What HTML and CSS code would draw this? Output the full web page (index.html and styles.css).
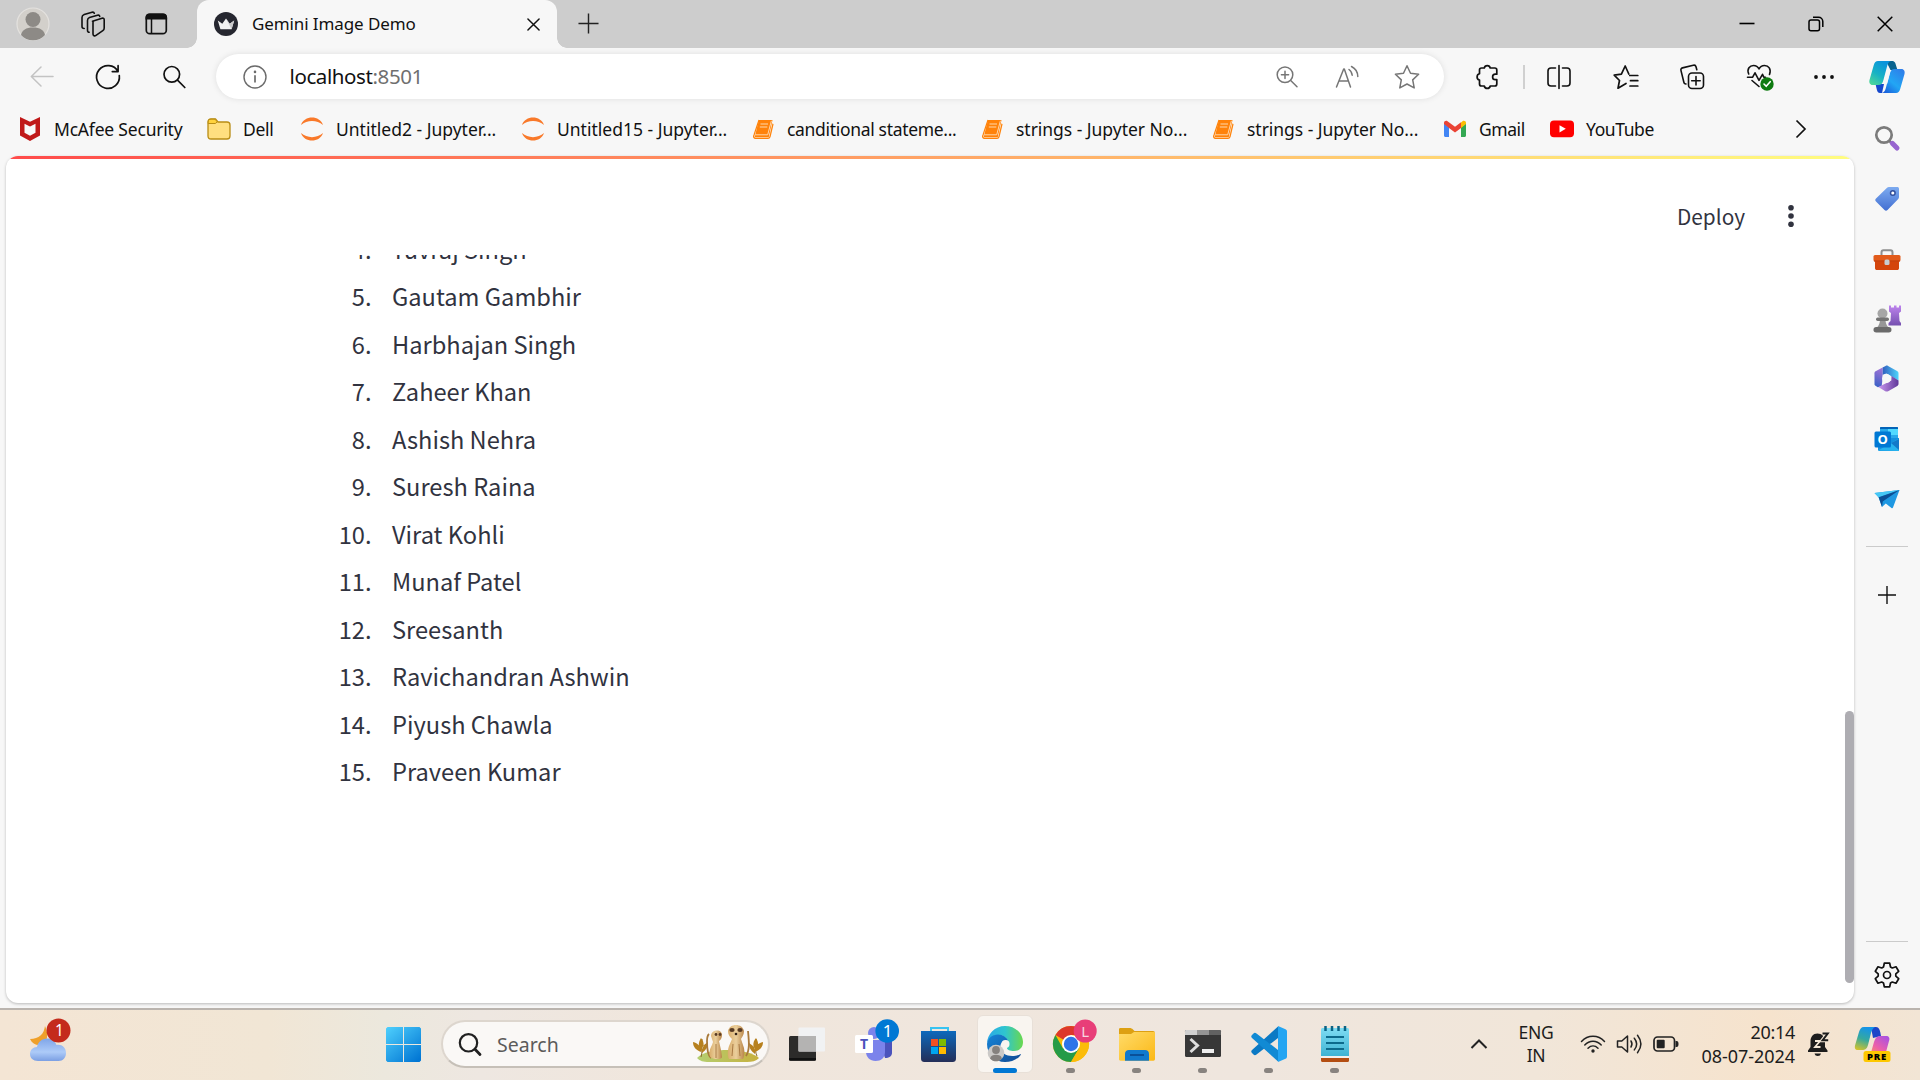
FILE: index.html
```html
<!DOCTYPE html>
<html lang="en">
<head>
<meta charset="utf-8">
<title>Gemini Image Demo</title>
<link rel="stylesheet" href="styles.css">
</head>
<body>
<div class="desktop">
  <header class="tabstrip">
    <div class="strip-left">
      <svg class="avatar" viewBox="0 0 34 34"><circle cx="17" cy="17" r="16" fill="#d3d0cb" stroke="#e4e2df" stroke-width="1.2"/><circle cx="17" cy="12.500" r="7.500" fill="#8d8a86"/><path d="M5 28c1-5 5-7.500 12-7.500s11 2.500 12 7.500c-3 3.500-7 5.200-12 5.200S8 31.500 5 28z" fill="#8d8a86"/></svg>
      <svg class="i26" viewBox="0 0 26 26" fill="none" stroke="#111" stroke-width="1.600" stroke-linejoin="round" stroke-linecap="round"><path d="M12.500 10.200l9.500-2.900c1.300-.4 2.200.2 2.200 1.500V17c0 1.200-.4 2-1.400 2.700l-6.800 4.700c-1.500 1-3 .4-3-1.300V11.500c0-.7 0-1 .5-1.300z"/><path d="M9.200 21.200c-1 0-1.700-.7-1.700-2V9.500c0-1.500.7-2.500 2-3L17.500 4.200c1.200-.3 2 .2 2.200 1.200"/><path d="M4.200 17.500c-1.400 0-2.200-.8-2.200-2V6.500C2 5 2.800 4 4.200 3.500L12 1.200c1.200-.3 2 .1 2.300 1"/></svg>
      <svg class="i26" viewBox="0 0 26 26"><rect x="3.300" y="3.300" width="20" height="19.400" rx="3.500" fill="none" stroke="#111" stroke-width="1.700"/><path d="M2.500 8.500V6.500a4 4 0 014-4h13.600a4 4 0 014 4v2z" fill="#111"/><path d="M8.500 8v14.500" stroke="#111" stroke-width="1.500"/></svg>
    </div>
    <div class="tab">
      <svg class="i24" viewBox="0 0 24 24"><circle cx="12" cy="12" r="12" fill="#262730"/><path d="M3.800 8.500l4.500 3.200L12 6.500l3.700 5.200 4.500-3.200-2.600 8.700H6.400z" fill="#f2f2f2"/><path d="M12 6.500l3.700 5.200 4.500-3.200-2.600 8.700z" fill="#c9c9cb"/></svg>
      <span class="tab-title">Gemini Image Demo</span>
      <svg class="tab-close" viewBox="0 0 14 14" stroke="#111" stroke-width="1.600" stroke-linecap="round"><path d="M1 1l12 12M13 1L1 13"/></svg>
    </div>
    <svg class="newtab" viewBox="0 0 22 22" stroke="#222" stroke-width="1.500"><path d="M11 .5v21M.5 11h21"/></svg>
    <div class="win-buttons">
      <svg viewBox="0 0 16 16" stroke="#000" stroke-width="1.600"><path d="M.5 7.500h15"/></svg>
      <svg viewBox="0 0 16 16" fill="none" stroke="#000" stroke-width="1.500"><rect x="1" y="4" width="10.500" height="10.800" rx="2"/><path d="M5 1.300h5.500a4.300 4.300 0 014.300 4.300V11"/></svg>
      <svg viewBox="0 0 16 16" stroke="#000" stroke-width="1.500"><path d="M.7.700l14.600 14.600M15.300.7L.7 15.300"/></svg>
    </div>
  </header>

  <div class="browser">
    <div class="main">
      <nav class="toolbar">
        <div class="nav-left">
          <svg class="i24" viewBox="0 0 24 24" fill="none" stroke="#c3c3c3" stroke-width="1.500" stroke-linecap="round" stroke-linejoin="round"><path d="M23 11.500H1.500M11 2L1.300 11.500 11 21"/></svg>
          <svg class="i26" viewBox="0 0 26 26" fill="none" stroke="#111" stroke-width="1.700" stroke-linecap="round" stroke-linejoin="round"><path d="M24.300 11.500A11.400 11.400 0 1123 7.500M17.300 7.600h5.800V1.700"/></svg>
          <svg class="i24" viewBox="0 0 24 24" fill="none" stroke="#111" stroke-width="1.700" stroke-linecap="round"><circle cx="9.800" cy="9.300" r="7.800"/><path d="M15.500 15.200l7.300 7.300"/></svg>
        </div>
        <div class="address">
          <svg class="i24" viewBox="0 0 24 24" fill="none" stroke="#6b6b6b" stroke-width="1.400"><circle cx="12" cy="12" r="11"/><path d="M12 10.200v7.300" stroke-width="1.700"/><circle cx="12" cy="6.900" r=".6" fill="#6b6b6b"/></svg>
          <span class="url">localhost<span class="port">:8501</span></span>
          <div class="address-actions">
            <svg class="i24" viewBox="0 0 24 24" fill="none" stroke="#767676" stroke-width="1.500" stroke-linecap="round"><circle cx="10" cy="9.800" r="7.800"/><path d="M15.700 15.500l6.300 6.300M10 6.200v7.200M6.400 9.800h7.200"/></svg>
            <svg class="i24" viewBox="0 0 24 24" fill="none" stroke="#767676" stroke-width="1.500" stroke-linecap="round" stroke-linejoin="round"><path d="M1.500 22L8.700 4h.6l6.200 18M3.900 16h9.400M14 4.500c2 1.400 3 3.400 3.200 5.800M16.500 1.500c4 2 6.200 5.500 6.300 10"/></svg>
            <svg class="i26" viewBox="0 0 26 26" fill="none" stroke="#767676" stroke-width="1.500" stroke-linejoin="round"><path d="M13 1.800l3.500 7.400 8.100 1.100-5.900 5.600 1.500 8L13 20l-7.200 3.900 1.500-8-5.900-5.600 8.100-1.100z"/></svg>
          </div>
        </div>
        <div class="tools">
          <svg class="i26" viewBox="0 0 26 26" fill="none" stroke="#111" stroke-width="1.700" stroke-linejoin="round"><path d="M10.300 4a3 3 0 015.900 0h4.600c1.300 0 2 .7 2 2v4.200h-1.500a2.700 2.700 0 000 5.400h1.500V20c0 1.300-.7 2-2 2h-4.600a3 3 0 01-5.900 0H7.500c-1.300 0-2-.7-2-2v-4a3.200 3.200 0 010-6.200V6c0-1.300.7-2 2-2z"/></svg>
          <i class="divider"></i>
          <svg class="i26" viewBox="0 0 26 26" fill="none" stroke="#111" stroke-width="1.600" stroke-linecap="round"><path d="M13 1.500v23M9.500 4H5C3 4 2 5 2 7v12c0 2 1 3 3 3h4.500M16.500 4H21c2 0 3 1 3 3v12c0 2-1 3-3 3h-4.500"/></svg>
          <svg class="i26" viewBox="0 0 26 26" fill="none" stroke="#111" stroke-width="1.700" stroke-linecap="round" stroke-linejoin="round"><path d="M13 19.500l-8 4.700 1.500-7.700-5.300-5.400 7.200-1L12.200 2l3.600 8M16.800 11.500h8M17.500 16.700h7.300M17 22h7.800"/></svg>
          <svg class="i26" viewBox="0 0 26 26" fill="none" stroke="#111" stroke-width="1.600" stroke-linejoin="round" stroke-linecap="round"><rect x="9.500" y="9" width="15" height="15.500" rx="3.500"/><path d="M17 12.500v8.500M12.700 16.700h8.500M7 20c-1 0-2-.7-2.200-2L2 6.600c-.4-1.300.2-2.400 1.500-2.700L14.300 1.200c1.300-.3 2.400.3 2.700 1.500l.8 3"/></svg>
          <svg class="heart" viewBox="0 0 28 28" fill="none" stroke="#111" stroke-width="1.600" stroke-linejoin="round" stroke-linecap="round"><path d="M2.700 11C.5 5.500 4 2.500 7.500 2.500c2.500 0 4.400 1.300 5.500 3.500 1.100-2.200 3-3.500 5.500-3.500 4 0 7 3.500 5 9M1.500 14.300h5l2.500-4.500 4 7.500 3.500-6 1.500 3h1.500M6 17.500l7 6"/><circle cx="21" cy="21" r="6.700" fill="#0f7b10" stroke="none"/><path d="M18 21l2.200 2.300 4-4.600" stroke="#fff"/></svg>
          <svg class="i24" viewBox="0 0 24 24" fill="#111"><circle cx="4" cy="12" r="1.900"/><circle cx="12" cy="12" r="1.900"/><circle cx="20" cy="12" r="1.900"/></svg>
        </div>
      </nav>

      <nav class="bookmarks">
        <a><svg class="bi" viewBox="0 0 24 24"><path d="M2 0l10 4.700L22 0v18.500L12 24 2 18.500z" fill="#c01818"/><path d="M6.500 6.800L12 9.500l5.500-2.700v9L12 18.700l-5.500-2.900z" fill="#f7f7f7"/></svg><span class="t1">McAfee Security</span></a>
        <a><svg class="bi" viewBox="0 0 24 24"><path d="M1 5c0-2 1-3 3-3h4.500l2.500 3h9c2 0 3 1 3 3v11c0 2-1 3-3 3H4c-2 0-3-1-3-3z" fill="#ffdf80" stroke="#b98d14" stroke-width="1.300"/><path d="M1.200 6.500V5c0-2 1-2.800 2.800-2.800h4l2.300 2.700-2 1.600z" fill="#ffd23d" stroke="#b98d14"/></svg><span class="t2">Dell</span></a>
        <a><svg class="bi" viewBox="0 0 24 24" fill="#f9792a"><path d="M1 8C4-2 20-2 23 8 17 2.500 7 2.500 1 8zM1 16c6 5.500 16 5.500 22 0-3 10-19 10-22 0z"/></svg><span class="t3">Untitled2 - Jupyter...</span></a>
        <a><svg class="bi" viewBox="0 0 24 24" fill="#f9792a"><path d="M1 8C4-2 20-2 23 8 17 2.500 7 2.500 1 8zM1 16c6 5.500 16 5.500 22 0-3 10-19 10-22 0z"/></svg><span class="t4">Untitled15 - Jupyter...</span></a>
        <a><svg class="bi" viewBox="0 0 24 24"><path d="M8 3h13.500l-3.800 17.500H3.500z" fill="#ff8209"/><path d="M21.500 6l.3 1-3.500 13.500H4c-1.500-.4-1.500-2-.5-2.700h13.200l3.700-14M9.500 7h7.500M8.800 10h7.500" fill="none" stroke="#ffd8ac" stroke-width="1"/><path d="M8 3L3 18c-1 2 0 3.300 1.500 3.300H17c1 0 1.700-.5 2-1.500L22 7" fill="none" stroke="#ff8209" stroke-width="1.200"/></svg><span class="t5">canditional stateme...</span></a>
        <a><svg class="bi" viewBox="0 0 24 24"><path d="M8 3h13.500l-3.800 17.500H3.500z" fill="#ff8209"/><path d="M21.500 6l.3 1-3.500 13.500H4c-1.500-.4-1.500-2-.5-2.700h13.200l3.700-14M9.500 7h7.500M8.800 10h7.500" fill="none" stroke="#ffd8ac" stroke-width="1"/><path d="M8 3L3 18c-1 2 0 3.300 1.500 3.300H17c1 0 1.700-.5 2-1.500L22 7" fill="none" stroke="#ff8209" stroke-width="1.200"/></svg><span class="t6">strings - Jupyter No...</span></a>
        <a><svg class="bi" viewBox="0 0 24 24"><path d="M8 3h13.500l-3.800 17.500H3.500z" fill="#ff8209"/><path d="M21.500 6l.3 1-3.500 13.500H4c-1.500-.4-1.500-2-.5-2.700h13.200l3.700-14M9.500 7h7.500M8.800 10h7.500" fill="none" stroke="#ffd8ac" stroke-width="1"/><path d="M8 3L3 18c-1 2 0 3.300 1.500 3.300H17c1 0 1.700-.5 2-1.500L22 7" fill="none" stroke="#ff8209" stroke-width="1.200"/></svg><span class="t6">strings - Jupyter No...</span></a>
        <a><svg class="bi" viewBox="0 0 24 24"><path d="M1 6.500l5 3.700V20H2.500C1.600 20 1 19.400 1 18.500z" fill="#4285f4"/><path d="M18 10.200l5-3.700v12c0 .9-.6 1.500-1.500 1.500H18z" fill="#34a853"/><path d="M18 5.500l1.500-1.200C21 3.200 23 4.200 23 6v1l-5 4z" fill="#fbbc04"/><path d="M1 7V6c0-1.800 2-2.800 3.500-1.700L12 9.800l6-4.500V11l-6 4.500L6 11z" fill="#ea4335"/></svg><span class="t8">Gmail</span></a>
        <a><svg class="bi" viewBox="0 0 24 24"><rect y="3.500" width="24" height="16.800" rx="4" fill="#f00"/><path d="M9.500 8.200v7.200l6.300-3.600z" fill="#fff"/></svg><span class="t9">YouTube</span></a>
        <svg class="more" viewBox="0 0 12 20" fill="none" stroke="#111" stroke-width="1.700"><path d="M1.500 1.500l8.500 8.500-8.500 8.500"/></svg>
      </nav>

      <main class="page">
        <div class="app-header">
          <span class="deploy">Deploy</span>
          <svg class="kebab" viewBox="0 0 6 24" fill="#31333f"><circle cx="3" cy="3.700" r="2.800"/><circle cx="3" cy="12" r="2.800"/><circle cx="3" cy="20.300" r="2.800"/></svg>
        </div>
        <div class="scroller">
          <ol class="names">
            <li><b>4.</b><span>Yuvraj Singh</span></li>
            <li><b>5.</b><span>Gautam Gambhir</span></li>
            <li><b>6.</b><span>Harbhajan Singh</span></li>
            <li><b>7.</b><span>Zaheer Khan</span></li>
            <li><b>8.</b><span>Ashish Nehra</span></li>
            <li><b>9.</b><span>Suresh Raina</span></li>
            <li><b>10.</b><span>Virat Kohli</span></li>
            <li><b>11.</b><span>Munaf Patel</span></li>
            <li><b>12.</b><span>Sreesanth</span></li>
            <li><b>13.</b><span>Ravichandran Ashwin</span></li>
            <li><b>14.</b><span>Piyush Chawla</span></li>
            <li><b>15.</b><span>Praveen Kumar</span></li>
          </ol>
          <div class="scrollbar"></div>
        </div>
      </main>
    </div>

    <aside class="sidebar">
      <svg class="copilot" viewBox="0 0 36 34">
        <defs>
          <linearGradient id="cpA" x1="0" y1="1" x2=".6" y2="0"><stop offset="0" stop-color="#56dc92"/><stop offset=".5" stop-color="#18b2c4"/><stop offset="1" stop-color="#0a93dc"/></linearGradient>
          <linearGradient id="cpB" x1="1" y1="0" x2=".2" y2="1"><stop offset="0" stop-color="#3079e8"/><stop offset=".6" stop-color="#22a6f4"/><stop offset="1" stop-color="#1b62dc"/></linearGradient>
        </defs>
        <path d="M17 1h6c3 0 3.600 2.500 4.200 5l1.300 4h-7z" fill="#09638f"/><path d="M13 33h-2c-2 0-2.700-1.500-3.200-3.500L6.500 24H15z" fill="#1648cc"/>
        <path d="M9 1h13c-2 .5-3 2-3.700 4.500l-4 15c-.8 3-2.200 4.500-5 4.500H3.500C1 25-.2 22.500.5 20L4.800 5C5.600 2.500 6.800 1 9 1z" fill="url(#cpA)"/>
        <path d="M27 33H12.500c2.500-.5 3.500-2 4.200-4.500l4-15c.8-3 2.200-4.500 5-4.500h6.800c2.500 0 3.700 2.500 3 5L31.200 29c-.8 2.500-2 4-4.200 4z" fill="url(#cpB)"/>
        <path d="M18.500 10.500h3.200l-3.600 13.500h-4.600z" fill="#f7f7f7"/>
      </svg>
      <svg class="s-search" viewBox="0 0 26 26"><circle cx="10" cy="10" r="7.700" fill="none" stroke="#7b7b7b" stroke-width="2.700"/><path d="M15.500 16l3 3" stroke="#777" stroke-width="2.500"/><path d="M18.300 18.300l4.700 4.700" stroke="#9765cf" stroke-width="5" stroke-linecap="round"/></svg>
      <svg class="s-tag" viewBox="0 0 26 26"><defs><linearGradient id="tg" x1="0" y1="0" x2="0" y2="1"><stop offset="0" stop-color="#7dabf0"/><stop offset="1" stop-color="#426fd2"/></linearGradient></defs><path d="M15 1h8c1.400 0 2 .6 2 2v8c0 .9-.4 1.600-1 2.200L13.500 24c-1 1-2 1-3 0L2 15.500c-1-1-1-2 0-3L12.800 2c.6-.6 1.300-1 2.200-1z" fill="url(#tg)"/><circle cx="18.800" cy="7" r="2.300" fill="#fff" stroke="#314f9e" stroke-width="1.500"/></svg>
      <svg class="s-box" viewBox="0 0 28 22"><path d="M8.500 6V3.500C8.500 2 9.300 1.300 10.500 1.300h7c1.200 0 2 .7 2 2.200V6" fill="none" stroke="#8e8e8e" stroke-width="2"/><path d="M2 11h24v8c0 1.400-.8 2-2 2H4c-1.200 0-2-.6-2-2z" fill="#d4450c"/><rect x=".5" y="6" width="27" height="6.500" rx="1.500" fill="#e25b1b"/><path d="M1 12h26" stroke="#bc3808"/><rect x="11.500" y="10.500" width="5" height="5.500" rx="1.500" fill="#c7cdd2"/></svg>
      <svg class="s-chess" viewBox="0 0 28 28"><defs><linearGradient id="pk" x1="0" y1="0" x2="0" y2="1"><stop offset="0" stop-color="#bd83ed"/><stop offset="1" stop-color="#7651b0"/></linearGradient></defs><path d="M16 .5h2v2h3v-2h2.500v2h2.500v-2h2v6l-2 1.500.5 8 1.500 2v2.500H15.500V18l2-2 .5-8-2-1.500z" fill="url(#pk)"/><circle cx="9.500" cy="8.500" r="5" fill="#a6a6a6"/><path d="M7 14h5.500c0 4 .8 6 3 8.500H4c2.200-2.500 3-4.500 3-8.500z" fill="#979797"/><rect x="3" y="12.500" width="13" height="3.500" rx="1.700" fill="#747474"/><rect x=".5" y="22" width="18" height="5.500" rx="2.700" fill="#6b6b6b"/></svg>
      <svg class="s-m365" viewBox="0 0 26 28"><defs><linearGradient id="ma" x1=".2" y1="0" x2="0" y2="1"><stop offset="0" stop-color="#9b72d5"/><stop offset="1" stop-color="#335fc5"/></linearGradient><linearGradient id="mb"><stop offset="0" stop-color="#315fbf"/><stop offset="1" stop-color="#4ed5fc"/></linearGradient><linearGradient id="mc"><stop offset="0" stop-color="#cb99f1"/><stop offset="1" stop-color="#603799"/></linearGradient></defs><path d="M9 2.500V13l-1 9-4 1-2.500-1.500C.7 21 .5 20.500.5 19.500V8.500c0-1 .4-1.500 1.200-2z" fill="url(#ma)"/><path d="M9 10V2.500l3-1.600c1-.5 1.700-.5 2.600 0L24 6.200c1 .5 1.500 1.300 1.500 2.500V16l-8-4.700L13 8.800z" fill="url(#mb)"/><path d="M25.500 16v3.500c0 1-.5 1.700-1.300 2.200l-9.500 5.500c-1 .5-2 .5-3 0l-7.200-4.300 8-4L18 16l.2-4.500z" fill="url(#mc)"/><circle cx="13" cy="14" r="4.600" fill="#f7f7f7"/></svg>
      <svg class="s-outlook" viewBox="0 0 26 26"><rect x="6" y="1" width="18" height="14" rx="1.200" fill="#28a8ea"/><path d="M6 2.200C6 1.500 6.500 1 7 1h16c.6 0 1 .5 1 1.200V3H6z" fill="#0364b8"/><path d="M14 3h10v6H14z" fill="#50d9ff"/><path d="M4 12h21v12c0 .7-.5 1-1 1H5.200c-.7 0-1.200-.5-1.200-1.200z" fill="#1490df"/><path d="M4 24.500L25 12.500V24c0 .7-.5 1-1.200 1z" fill="#28b3ee"/><path d="M17 17l8 7v-11z" fill="#1479c9"/><rect x=".5" y="5.500" width="16.500" height="16" rx="1.500" fill="#0078d4"/><text x="8.700" y="18.200" text-anchor="middle" class="glyph" font-size="13" fill="#fff">O</text></svg>
      <svg class="s-send" viewBox="0 0 26 20"><path d="M.5 4L25.500 1 19 18.500c-.3.800-.8 1-1.500.6l-5.700-4.600L8 18 4.500 8.300z" fill="#1e98e2"/><path d="M.5 4L25.500 1 4.800 8.500z" fill="#45c7f5"/><path d="M4.700 8.300L25.500 1 8.700 12.500 8 18z" fill="#0b4f95"/></svg>
      <i class="s-line"></i>
      <svg class="s-plus" viewBox="0 0 18 18" stroke="#111" stroke-width="1.400"><path d="M9 0v18M0 9h18"/></svg>
      <div class="s-bottom">
        <i class="s-line"></i>
        <svg class="s-gear" viewBox="0 0 26 26" fill="none" stroke="#111" stroke-width="1.700" stroke-linejoin="round"><path d="M10.300 1.200h5.400l.8 3.800 1.800 1 3.700-1.200L24.700 9.300l-2.900 2.600v2.200l2.900 2.600L22 21.200 18.300 20l-1.800 1-.8 3.800h-5.400L9.500 21l-1.800-1L4 21.200l-2.700-4.500 2.900-2.600v-2.200L1.300 9.300 4 4.800 7.700 6l1.800-1z"/><circle cx="13" cy="13" r="3.500"/></svg>
      </div>
    </aside>
  </div>

  <footer class="taskbar">
    <div class="weather">
      <svg viewBox="0 0 42 44"><defs><linearGradient id="cl" x1="0" y1="0" x2="0" y2="1"><stop offset="0" stop-color="#7fa5e8"/><stop offset=".6" stop-color="#adcbf8"/><stop offset="1" stop-color="#7b9fe3"/></linearGradient></defs><path d="M15 8c4 9 3 17-6 19-4 0-7-2-9-6 9 0 14-5 15-13z" fill="#efa02a"/><path d="M8 43c-5 0-8-3.200-8-7 0-4 3-7 7-7 1-5 5-8.500 10-8.500 4.500 0 8 2.500 9.500 6.500 5-1 9.500 2.500 9.500 8 0 4.500-3 8-7.500 8z" fill="url(#cl)"/><circle cx="28.500" cy="12.500" r="12" fill="#c42b1c"/><text x="29.500" y="18" text-anchor="middle" class="badge-text" font-size="15.500" fill="#fff">1</text></svg>
    </div>
    <div class="center">
      <svg class="start" viewBox="0 0 35 35"><defs><linearGradient id="wn" gradientUnits="userSpaceOnUse" x1="0" y1="0" x2="30" y2="35"><stop offset="0" stop-color="#4fd0fd"/><stop offset="1" stop-color="#0277d4"/></linearGradient></defs><path d="M1.500 0H17v17H0V1.500zM18 0h15.500L35 1.500V17H18zM0 18h17v17H1.500L0 33.500zM18 18h17v15.500L33.500 35H18z" fill="url(#wn)"/></svg>
      <div class="searchbox">
        <svg class="i24" viewBox="0 0 24 24" fill="none" stroke="#202020" stroke-width="2.200" stroke-linecap="round"><circle cx="10.500" cy="10.800" r="8.700"/><path d="M17 17.300l5 5.200" stroke-width="2.800"/></svg>
        <span>Search</span>
        <svg class="meerkats" viewBox="0 0 72 40"><defs><linearGradient id="gr"><stop offset="0" stop-color="#b4cf72"/><stop offset="1" stop-color="#c7b03e"/></linearGradient><linearGradient id="fur"><stop offset="0" stop-color="#d9ad6b"/><stop offset=".5" stop-color="#ebcf9c"/><stop offset="1" stop-color="#b98548"/></linearGradient></defs>
          <path d="M5 34c5-6 19-8 31-8s26 3 31 8c-3 3-7 4-12 4H17c-6 0-9-1-12-4z" fill="url(#gr)"/>
          <path d="M9 33C11 28 9 22 10 15M65 32c-3-6 0-11-1-17" fill="none" stroke="#8b672a"/><path d="M1 18c5 1 8 5 8 10-5-2-8-5-8-10zM9 14c4 5 3 9 0 13-3-4-3-8 0-13zM16 18c-5 3-7 6-6 11 4-3 6-6 6-11zM71 18c-5 1-8 5-8 10 5-2 8-5 8-10zM64 14c-4 5-3 9 0 13 3-4 3-8 0-13zM57 19c5 3 7 6 6 11-4-3-6-6-6-11z" fill="#b7811f"/>
          <path d="M19 34c-4-3-4-12-4-17 0-4 1-6 2-7M54 32c4-6 3-15 2-25" fill="none" stroke="#a97a3c" stroke-width="1.800"/>
          <path d="M19 12c0-3 2-5.500 6-5.500 3 0 5 2 5 4.500s-1 5-3 6l2 9 1 7c0 1.500-2 2-5 2-6 0-8-2-7.500-7 .3-4 2.500-6 3.500-10z" fill="url(#fur)"/><path d="M36 7c1-4 4-6 8-6s7 2 8 6c0 4-2 6-3 8l3 9c1 5 0 9-1 11H37c-2-4-1-10 0-13l3-7c-2-2-4-4-4-8z" fill="url(#fur)"/>
          <ellipse cx="40" cy="6" rx="2.600" ry="2" fill="#583b25"/><ellipse cx="48" cy="6" rx="2.600" ry="2" fill="#583b25"/><circle cx="24" cy="10.500" r="1.400" fill="#583b25"/><circle cx="28" cy="10.500" r="1.400" fill="#583b25"/><circle cx="44" cy="10" r="1.300" fill="#35241a"/><path d="M24 20v14M41 20l-1 12M47 20l1 12" stroke="#a97a44" fill="none"/></svg>
      </div>
      <div class="app"><svg viewBox="0 0 56 56"><rect x="10" y="20" width="27" height="25" rx="1.500" fill="#2c2b2a"/><path d="M10 43h27" stroke="#111" stroke-width="2"/><rect x="19.500" y="11.500" width="26.500" height="24" rx="1" fill="#f1f2f3"/><path d="M19.500 20H37v15.500H19.500z" fill="#b4b3b2"/></svg></div>
      <div class="app"><svg viewBox="0 0 56 56"><circle cx="29" cy="17" r="6" fill="#7b83eb"/><path d="M34 24h13v13c0 3-3 5-7 5z" fill="#4b53bc"/><path d="M21 24h19v12c0 6-4 9-9.500 9S21 41 21 36z" fill="#7b83eb"/><rect x="10" y="19" width="18" height="18" rx="1.500" fill="#fff"/><text x="19" y="33" text-anchor="middle" class="glyph" font-size="14" fill="#4b53bc">T</text><circle cx="42.200" cy="15" r="11.800" fill="#0078d4"/><text x="42.500" y="21" text-anchor="middle" class="badge-text" font-size="17" fill="#fff">1</text></svg></div>
      <div class="app"><svg viewBox="0 0 56 56"><defs><linearGradient id="st" x1="0" y1="0" x2="0" y2="1"><stop offset="0" stop-color="#0d69bc"/><stop offset="1" stop-color="#242e58"/></linearGradient></defs><path d="M20 16v-4h17v4" fill="none" stroke="#37c3f1" stroke-width="2"/><path d="M10 15h35v27c0 3-1 4-4 4H14c-3 0-4-1-4-4z" fill="url(#st)"/><path d="M20 23h7v7h-7z" fill="#f25022"/><path d="M28 23h7v7h-7z" fill="#7fba00"/><path d="M20 31h7v7h-7z" fill="#00a4ef"/><path d="M28 31h7v7h-7z" fill="#ffb900"/></svg></div>
      <div class="app active"><svg viewBox="0 0 56 56"><defs><linearGradient id="ea"><stop offset="0" stop-color="#2aa8e8"/><stop offset=".5" stop-color="#2fc5cf"/><stop offset="1" stop-color="#6ad84d"/></linearGradient><linearGradient id="eb" x1="0" y1="0" x2="1" y2="1"><stop offset="0" stop-color="#1684d8"/><stop offset="1" stop-color="#114a93"/></linearGradient></defs><path d="M10 28c0-10 8-18 18-18 11 0 18 8 18 16 0 6-4 9-9 9-4 0-7-1-7-3 0-1 1.500-2 1.500-4.500 0-4-4-8.500-10-8.500S11 23 10 28z" fill="url(#ea)"/><path d="M10 28c1-6 5-9.500 11-9.500 5 0 9 3 10.300 6.500-5-1-8 2-8 6 0 6 6 9 12 9 4 0 7-1 8-2 .5 0 .7.400.4.900C40.500 43.500 34.500 46 28 46c-10 0-18-8-18-18z" fill="url(#eb)"/><circle cx="28.500" cy="28" r="4" fill="#f9f5f0"/><path d="M27 31c3 5 10 7 17 4l-1.500 3c-6 2-13 0-15.500-7z" fill="#f9f5f0"/><circle cx="19" cy="37" r="8.300" fill="#cbc9c7"/><circle cx="19" cy="34" r="3.900" fill="#85817e"/><path d="M13 42.500c1-3 3-3.700 6-3.700s5 .7 6 3.700c-2 2-3.800 2.800-6 2.800s-4.200-.8-6-2.800z" fill="#85817e"/></svg><i class="ind wide"></i></div>
      <div class="app"><svg viewBox="0 0 56 56"><circle cx="28" cy="28" r="18" fill="#fbbc05"/><path d="M28 28L12.400 19A18 18 0 0143.600 19H28z" fill="#dd382b"/><path d="M12.400 19A18 18 0 0028 46l8-13.500-8-4.500-8 4.500z" fill="#259b48"/><path d="M43.600 19H28v9l8 4.500L28 46a18 18 0 0015.600-27z" fill="#fbbc0a"/><circle cx="28" cy="28" r="9" fill="#fff"/><circle cx="28" cy="28" r="7.200" fill="#2f74e8"/><circle cx="42.200" cy="15" r="11.500" fill="#e83e78"/><text x="42.200" y="20.500" text-anchor="middle" class="badge-text" font-size="15" fill="#f7d5e0">L</text></svg><i class="ind"></i></div>
      <div class="app"><svg viewBox="0 0 56 56"><defs><linearGradient id="fd" x1="0" y1="0" x2="1" y2="1"><stop offset="0" stop-color="#ffdb69"/><stop offset="1" stop-color="#fbb816"/></linearGradient></defs><path d="M10 13.500c0-1 .5-1.500 1.500-1.500h9c1.500 0 2.500.5 3.500 1.500l1.500 1.500H44c1.200 0 2 .8 2 2v6H10z" fill="#dda012"/><path d="M10 18h12l3-2h21v27c0 1-.7 1.700-1.500 1.700h-33c-.9 0-1.500-.7-1.500-1.700z" fill="url(#fd)"/><path d="M16 44.700V38c0-2.500 1.500-4 4-4h16c2.500 0 4 1.500 4 4v6.700z" fill="#1179cd"/><path d="M21 39h14" stroke="#0b4c94" stroke-width="1.800"/></svg><i class="ind"></i></div>
      <div class="app"><svg viewBox="0 0 56 56"><rect x="10" y="14" width="36" height="27" rx="1.500" fill="#373737"/><path d="M10 19v-3.500c0-1 .5-1.500 1.500-1.500H22v5z" fill="#cfcfcf"/><path d="M22 14h12v5H22z" fill="#949494"/><path d="M34 14h10.500c1 0 1.500.5 1.500 1.500V19H34z" fill="#626262"/><path d="M15.500 23l7 6.500-7 6.500" fill="none" stroke="#ddd" stroke-width="3"/><path d="M27 33h12v4H27z" fill="#eee"/></svg><i class="ind"></i></div>
      <div class="app"><svg viewBox="0 0 56 56"><path d="M37 10.500L11 34c-1 1-1 2 0 3l1.500 1.500c1 1 2 .8 3 0L37 22z" fill="#0b79c4"/><path d="M37 45.500L11 22c-1-1-1-2 0-3l1.500-1.500c1-1 2-.8 3 0L37 34z" fill="#118ad4"/><path d="M37 10l7.500 3.200c1 .5 1.500 1.200 1.500 2.300v25c0 1.100-.5 1.800-1.500 2.300L37 46z" fill="#24a5f2"/></svg><i class="ind"></i></div>
      <div class="app"><svg viewBox="0 0 56 56"><path d="M14 38h28v6.500c0 .8-.5 1.500-1.500 1.500h-25c-1 0-1.500-.7-1.500-1.500z" fill="#b44e12"/><path d="M14 36h28v6H14z" fill="#f4f0ec"/><defs><linearGradient id="np" x1="0" y1="0" x2="0" y2="1"><stop offset="0" stop-color="#7edcf3"/><stop offset="1" stop-color="#3fb3d3"/></linearGradient></defs><path d="M14 14c0-1.500.5-2 2-2h24c1.500 0 2 .5 2 2v26H14z" fill="url(#np)"/><path d="M19 21h18M19 27h18M19 33h18" stroke="#0c6a8c" stroke-width="1.900"/><path d="M18.500 10v5M25 10v5M31.500 10v5M38 10v5" stroke="#0a6385" stroke-width="2.500"/></svg><i class="ind"></i></div>
    </div>
    <div class="tray">
      <svg class="chev" viewBox="0 0 18 10" fill="none" stroke="#222" stroke-width="2"><path d="M1.500 9L9 1.500 16.500 9"/></svg>
      <div class="lang"><span>ENG</span><span>IN</span></div>
      <svg class="wifi" viewBox="0 0 26 20" fill="none" stroke="#222" stroke-width="1.500" stroke-linecap="round"><path d="M1.500 7.500c6.500-7 16.500-7 23 0M4.800 11c4.600-5 11.800-5 16.400 0M8 14.300c3-3 7-3 10 0"/><circle cx="13" cy="17" r="1.700" fill="#222" stroke="none"/></svg>
      <svg class="speaker" viewBox="0 0 26 22" fill="none" stroke="#222" stroke-width="1.500" stroke-linecap="round" stroke-linejoin="round"><path d="M1.500 8v6h4.300l5.700 5V3L5.800 8zM15 8c1.300 2 1.300 4 0 6M18.300 5.200c3 3.700 3 8 0 11.700M21.500 2.300c4.300 5.500 4.300 11.900 0 17.400"/></svg>
      <svg class="battery" viewBox="0 0 26 16"><rect x="1" y="1" width="20.500" height="14" rx="3.500" fill="none" stroke="#222" stroke-width="1.700"/><rect x="3.700" y="3.700" width="8" height="8.600" rx="1" fill="#222"/><path d="M22.500 5h1c1.500 0 2 1 2 3s-.5 3-2 3h-1z" fill="#222"/></svg>
      <div class="clock"><span>20:14</span><span class="date">08-07-2024</span></div>
      <svg class="bell" viewBox="0 0 24 26" fill="#1d1d1d"><path d="M10.500 2.500C6 2.500 3.500 6 3.500 10.500V16L1 19.500V21h19.500v-1.500L18 16V10.500l-2-1V4.500c-1.500-1.300-3.500-2-5.500-2z"/><path d="M7.500 22.500h6.500c-.5 1.700-1.500 2.500-3.200 2.500s-2.800-.8-3.300-2.500z"/><path d="M8 10h5l-5 6h5.500" fill="none" stroke="#f3e7d6" stroke-width="1.800"/><path d="M15.500 2.500h5.300l-5.300 6.800h5.700" fill="none" stroke="#f3e7d6" stroke-width="4"/><path d="M15.500 2.500h5.300l-5.300 6.800h5.700" fill="none" stroke="#1d1d1d" stroke-width="1.900"/></svg>
      <svg class="cpre" viewBox="0 0 36 35"><defs><linearGradient id="p1" x1=".5" y1="0" x2=".2" y2="1"><stop offset="0" stop-color="#1694e8"/><stop offset=".5" stop-color="#35a99f"/><stop offset="1" stop-color="#d2c22c"/></linearGradient><linearGradient id="p2" x1="1" y1="0" x2=".2" y2="1"><stop offset="0" stop-color="#a14fe8"/><stop offset=".6" stop-color="#ec5faa"/><stop offset="1" stop-color="#fb9a58"/></linearGradient></defs><path d="M16 0h5c3 0 4 3 5 9l-8 2z" fill="#1c45c8"/><path d="M26 29H12c3-1 4-3 5-7l2-7c1-4 3-6 6-6h6c3 0 4 2 3 5l-3 11c-1 2-2 4-5 4z" fill="url(#p2)"/><path d="M9 0h11c-2 1-3 3-4 6l-3 12c-1 4-3 5-6 5H3c-3 0-3.500-2-3-4.500L4 5c1-3 2-5 5-5z" fill="url(#p1)"/><rect x="8.500" y="24" width="27" height="11" rx="2.500" fill="#fdc800"/><text x="22" y="32.700" text-anchor="middle" class="pre" font-size="9.500">PRE</text></svg>
    </div>
  </footer>
</div>
</body>
</html>
```

FILE: styles.css
```css
* { box-sizing: border-box; }
body { margin: 0; background: #f7f7f7; font-family: "Noto Sans", "Open Sans", sans-serif; color: #111; }
svg { display: block; flex: none; overflow: visible; }
.desktop { width: 1920px; height: 1080px; display: flex; flex-direction: column; overflow: hidden; }
.i24 { width: 24px; height: 24px; }
.i26 { width: 26px; height: 26px; }
.glyph { font-family: "Open Sans", sans-serif; font-weight: 700; }
.badge-text { font-family: "Noto Sans", sans-serif; }
.pre { font-family: "Open Sans", sans-serif; font-weight: 800; letter-spacing: .8px; }

/* tab strip */
.tabstrip { height: 48px; flex: none; background: #cdcdcd; display: flex; align-items: center; }
.strip-left { width: 197px; display: flex; align-items: center; padding-left: 16px; }
.avatar { width: 34px; height: 34px; margin-right: 30px; }
.strip-left .i26 { margin-right: 37px; }
.tab { position: relative; width: 360px; height: 48px; background: #f7f7f7; border-radius: 12px 12px 0 0; display: flex; align-items: center; padding: 0 17px; }
.tab::before, .tab::after { content: ""; position: absolute; bottom: 0; width: 10px; height: 10px; }
.tab::before { left: -10px; background: radial-gradient(circle at 0 0, transparent 9.500px, #f7f7f7 10px); }
.tab::after { right: -10px; background: radial-gradient(circle at 100% 0, transparent 9.500px, #f7f7f7 10px); }
.tab-title { margin-left: 14px; font-size: 17px; line-height: 24px; letter-spacing: -.1px; white-space: nowrap; flex: 1; }
.tab-close { width: 13px; height: 13px; }
.newtab { width: 21px; height: 21px; margin: 0 0 2px 21px; }
.win-buttons { margin-left: auto; display: flex; gap: 53px; padding: 0 27px 1px 0; }
.win-buttons svg { width: 16px; height: 16px; }

/* browser frame */
.browser { flex: 1; min-height: 0; display: flex; background: #f7f7f7; }
.main { width: 1855px; display: flex; flex-direction: column; }
.toolbar { height: 57px; display: flex; align-items: center; flex: none; }
.nav-left { width: 216px; display: flex; align-items: center; gap: 41px; padding-left: 30px; }
.address { width: 1228px; height: 45px; background: #fff; border-radius: 23px; box-shadow: 0 0 6px rgba(0,0,0,.1); display: flex; align-items: center; padding: 0 24px 0 27px; }
.url { margin-left: 22.500px; font-size: 20.500px; line-height: 28px; letter-spacing: -.4px; white-space: nowrap; padding-bottom: 2px; }
.port { color: #6f6f6f; }
.address-actions { margin-left: auto; display: flex; align-items: center; gap: 35.500px; }
.tools { display: flex; align-items: center; padding-left: 30px; }
.tools .i26 { margin-right: 40.500px; }
.tools .i26:first-child { margin-right: 22.500px; }
.divider { width: 2px; height: 24px; background: #d0d0d0; margin-right: 21.500px; }
.heart { width: 28px; height: 28px; margin-right: 38px; }

.bookmarks { height: 48px; flex: none; display: grid; grid-template-columns: 189px 93px 221px 230px 229px 231px 232px 107px 245px 12px; align-items: center; padding-left: 18px; }
.bookmarks a { display: flex; align-items: center; gap: 12px; font-size: 17.500px; line-height: 24px; white-space: nowrap; letter-spacing: -.2px; }
.bookmarks a span { padding-bottom: 1px; }
.bookmarks .t1 { letter-spacing: -.2px; }
.bookmarks .t2 { letter-spacing: -.3px; }
.bookmarks .t3, .bookmarks .t4 { letter-spacing: 0; }
.bookmarks .t5 { letter-spacing: -.32px; }
.bookmarks .t6 { letter-spacing: -.03px; }
.bookmarks .t8 { letter-spacing: -.45px; }
.bookmarks .t9 { letter-spacing: -.4px; }
.bi { width: 24px; height: 24px; }
.more { width: 12px; height: 20px; }

/* page */
.page { position: relative; width: 1848px; height: 847px; margin: 3px 0 0 6px; background: #fff; border-radius: 12px; box-shadow: 0 1px 3px rgba(0,0,0,.25); overflow: hidden; display: flex; flex-direction: column; font-family: "Noto Sans CJK SC", sans-serif; color: #31333f; }
.page::before { content: ""; height: 3px; flex: none; background: linear-gradient(90deg, #ff4b4b, #fffd80); }
.app-header { height: 96px; flex: none; display: flex; align-items: center; justify-content: flex-end; padding: 17px 60px 0 0; }
.deploy { font-size: 20.800px; line-height: 30px; margin-right: 43px; }
.kebab { width: 6px; height: 24px; }
.scroller { flex: 1; overflow: hidden; display: flex; justify-content: space-between; }
.names { list-style: none; margin: -29.500px 0 0 330px; padding: 0; font-size: 23.650px; }
.names li { display: flex; height: 47.500px; line-height: 47.500px; white-space: nowrap; }
.names b { font-weight: 400; width: 35.500px; text-align: right; margin-right: 20.500px; }
.scrollbar { width: 9px; height: 272px; margin-top: 456px; border-radius: 5px; background: #aeadb2; }

/* edge sidebar */
.sidebar { width: 63px; display: flex; flex-direction: column; align-items: center; padding-top: 12px; }
.copilot { width: 36px; height: 34px; }
.s-search { width: 26px; height: 26px; margin-top: 31px; }
.s-tag { width: 26px; height: 26px; margin-top: 35px; }
.s-box { width: 28px; height: 22px; margin-top: 37px; }
.s-chess { width: 28px; height: 28px; margin-top: 34px; }
.s-m365 { width: 25px; height: 27px; margin-top: 32px; }
.s-outlook { width: 26px; height: 26px; margin-top: 34px; }
.s-send { width: 26px; height: 20px; margin-top: 37px; }
.s-line { width: 42px; height: 1px; background: #cbcbcb; margin-top: 37px; flex: none; }
.s-plus { width: 18px; height: 18px; margin-top: 39px; }
.s-bottom { margin-top: auto; display: flex; flex-direction: column; align-items: center; padding-bottom: 20px; }
.s-bottom .s-line { margin: 0 0 20px; }
.s-gear { width: 26px; height: 26px; }

/* taskbar */
.taskbar { height: 72px; flex: none; border-top: 2px solid #bab4ae; background: linear-gradient(90deg, #f4e5d4 0, #f1e6d5 14%, #ece8dd 20%, #eee7e1 25%, #f0e6dc 35%, #efe6de 65%, #f1e6d9 80%, #f6e3cd 92%, #f2e5d5 100%); display: flex; color: #1d1d1d; }
.weather { width: 386px; padding: 8px 0 0 30px; }
.weather svg { width: 42px; height: 44px; }
.center { display: flex; align-items: flex-start; }
.start { width: 35px; height: 35px; margin-top: 17px; }
.searchbox { width: 329px; height: 48px; margin: 10px 4px 0 20px; border: 2px solid #ddd6ce; border-bottom-color: #c6c0b8; border-radius: 24px; background: #faf8f6; display: flex; align-items: center; padding: 0 4px 0 15px; }
.searchbox span { font-size: 19.500px; line-height: 28px; color: #5c5b5a; margin-left: 15px; flex: 1; padding-top: 1px; }
.meerkats { width: 72px; height: 40px; }
.app { width: 56px; height: 58px; margin: 5px 5px 0; display: flex; flex-direction: column; align-items: center; border: 1px solid transparent; border-radius: 6px; position: relative; }
.app svg { width: 56px; height: 56px; }
.app.active { background: #f9f5f0; border-color: #e8e0d8; }
.ind { position: absolute; bottom: -1px; left: 22px; width: 9px; height: 5px; border-radius: 3px; background: #88837f; }
.ind.wide { width: 24px; left: 15px; background: #0078d4; }
.tray { flex: 1; display: flex; align-items: center; padding-bottom: 2px; }
.chev { width: 18px; height: 10px; margin-left: 102px; }
.lang { display: flex; flex-direction: column; align-items: center; width: 52px; margin-left: 22px; font-size: 17.500px; line-height: 23px; letter-spacing: -.3px; }
.wifi { width: 26px; height: 20px; margin-left: 18px; }
.speaker { width: 26px; height: 22px; margin-left: 10px; }
.battery { width: 26px; height: 16px; margin-left: 11px; }
.clock { display: flex; flex-direction: column; align-items: flex-end; width: 100px; margin-left: 16px; font-size: 18px; line-height: 24px; letter-spacing: -.3px; padding-bottom: 1px; }
.date { letter-spacing: -.05px; }
.bell { width: 24px; height: 26px; margin-left: 12px; }
.cpre { width: 36px; height: 35px; margin-left: 24px; }
```
